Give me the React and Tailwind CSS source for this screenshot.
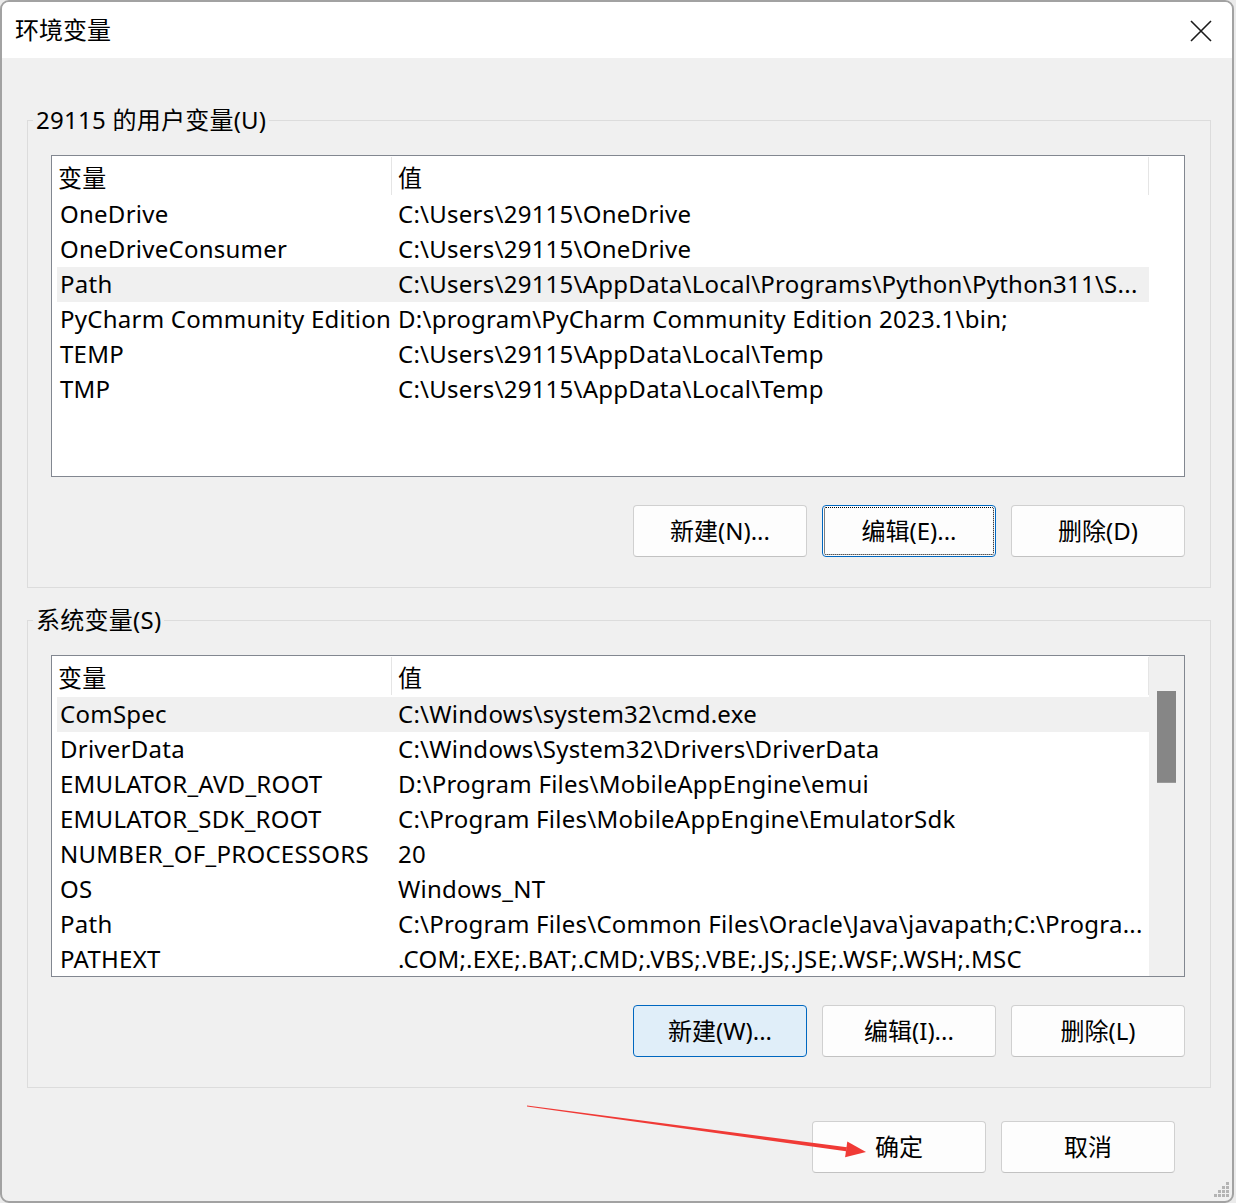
import clsx from "clsx";

const font = "font-['Noto_Sans','Noto_Sans_CJK_SC',sans-serif]";

const userVars = [
  ["OneDrive", "C:\\Users\\29115\\OneDrive"],
  ["OneDriveConsumer", "C:\\Users\\29115\\OneDrive"],
  ["Path", "C:\\Users\\29115\\AppData\\Local\\Programs\\Python\\Python311\\S..."],
  ["PyCharm Community Edition", "D:\\program\\PyCharm Community Edition 2023.1\\bin;"],
  ["TEMP", "C:\\Users\\29115\\AppData\\Local\\Temp"],
  ["TMP", "C:\\Users\\29115\\AppData\\Local\\Temp"],
];

const sysVars = [
  ["ComSpec", "C:\\Windows\\system32\\cmd.exe"],
  ["DriverData", "C:\\Windows\\System32\\Drivers\\DriverData"],
  ["EMULATOR_AVD_ROOT", "D:\\Program Files\\MobileAppEngine\\emui"],
  ["EMULATOR_SDK_ROOT", "C:\\Program Files\\MobileAppEngine\\EmulatorSdk"],
  ["NUMBER_OF_PROCESSORS", "20"],
  ["OS", "Windows_NT"],
  ["Path", "C:\\Program Files\\Common Files\\Oracle\\Java\\javapath;C:\\Progra..."],
  ["PATHEXT", ".COM;.EXE;.BAT;.CMD;.VBS;.VBE;.JS;.JSE;.WSF;.WSH;.MSC"],
];

// one dialog button, 174x52
const Btn = ({ children, kind }) => (
  <button
    className={clsx(
      "flex h-[52px] w-[174px] items-center justify-center rounded-[4px] border text-[24px] leading-[30px] text-black",
      kind === "focus" && "border-[#0067c0] bg-[#fdfdfd] outline-1 outline-dotted outline-black outline-offset-[-3px]",
      kind === "hot" && "border-[#0067c0] bg-[#e0eef9]",
      !kind && "border-[#d0d0d0] border-b-[#c2c2c2] bg-[#fdfdfd]"
    )}
  >
    {children}
  </button>
);

const VarList = ({ rows, selected, scroll }) => (
  <div className="mt-[19px] flex h-[322px] overflow-hidden border border-[#828790] bg-white text-[24px] leading-[30px] tracking-[0.25px] text-black">
    <div className="w-[1097px] shrink-0 pl-[5px]">
      {/* column header */}
      <div className="flex h-[41px] items-start">
        <div className="flex h-[40px] w-[334px] items-center pl-px pt-[3px]">变量</div>
        <div className="mt-px flex h-[38px] w-[758px] items-center border-x border-[#e5e5e5] pl-[6px] pt-[3px]">值</div>
      </div>
      {rows.map(([name, value], i) => (
        <div
          key={name + i}
          className={clsx("flex h-[35px] w-[1092px] items-center whitespace-nowrap pb-[2px]", i === selected && "bg-[#f0f0f0]")}
        >
          <div className="w-[334px] shrink-0 pl-[3px]">{name}</div>
          <div className="pl-[7px]">{value}</div>
        </div>
      ))}
    </div>
    {scroll && (
      <div className="flex-1 bg-[#f0f0f0] pt-[35px]">
        <div className="ml-[8px] h-[92px] w-[19px] border-b border-[#9a9a9a] bg-[#868686]" />
      </div>
    )}
  </div>
);

const Group = ({ title, className, rows, selected, scroll, buttons }) => (
  <fieldset className={clsx("ml-[25px] w-[1184px] border border-[#dcdcdc] pb-[30px]", className)}>
    <legend className="ml-[5px] px-[3px] text-[24px] leading-[32px] tracking-[0.25px] text-black">{title}</legend>
    <div className="ml-[23px] w-[1134px]">
      <VarList rows={rows} selected={selected} scroll={scroll} />
      <div className="mt-[28px] flex justify-end gap-[15px]">
        {buttons.map(([label, kind]) => (
          <Btn key={label} kind={kind}>
            {label}
          </Btn>
        ))}
      </div>
    </div>
  </fieldset>
);

export default function App() {
  return (
    <div className={clsx("relative h-[1203px] w-[1236px] bg-[#ebebeb]", font)}>
      <div className="flex h-[1203px] w-[1234px] flex-col overflow-hidden rounded-[9px] border-2 border-[#a2a2a2] bg-[#f0f0f0]">
        {/* title bar */}
        <div className="flex h-[56px] shrink-0 items-center justify-between bg-white pl-[13px] pr-[20px]">
          <span className="text-[24px] leading-[30px] text-black">环境变量</span>
          <svg width="22" height="22" viewBox="0 0 22 22" className="mt-px">
            <path d="M1 1L21 21M21 1L1 21" stroke="#1a1a1a" strokeWidth="1.6" />
          </svg>
        </div>

        <div className="pt-[46px]">
          <Group
            title="29115 的用户变量(U)"
            rows={userVars}
            selected={2}
            buttons={[["新建(N)..."], ["编辑(E)...", "focus"], ["删除(D)"]]}
          />
          <Group
            title="系统变量(S)"
            className="mt-[16px]"
            rows={sysVars}
            selected={0}
            scroll
            buttons={[["新建(W)...", "hot"], ["编辑(I)..."], ["删除(L)"]]}
          />
          <div className="mr-[57px] mt-[33px] flex justify-end gap-[15px]">
            <Btn>确定</Btn>
            <Btn>取消</Btn>
          </div>
        </div>
      </div>

      {/* size grip */}
      <svg className="absolute bottom-[5px] right-[6px]" width="16" height="16" viewBox="0 0 16 16">
        {[
          [12, 0],
          [8, 4],
          [12, 4],
          [4, 8],
          [8, 8],
          [12, 8],
          [0, 12],
          [4, 12],
          [8, 12],
          [12, 12],
        ].map(([x, y]) => (
          <rect key={x + "-" + y} x={x} y={y} width="3" height="3" fill="#b4b4b4" />
        ))}
      </svg>

      {/* red annotation arrow */}
      <svg className="pointer-events-none absolute left-0 top-0" width="1236" height="1203" viewBox="0 0 1236 1203">
        <polygon points="527,1105.4 847,1147.3 846,1151.3 527,1106.6" fill="#f03a36" />
        <polygon points="866,1152 847.3,1141.4 845.1,1157.2" fill="#f03a36" />
      </svg>
    </div>
  );
}
